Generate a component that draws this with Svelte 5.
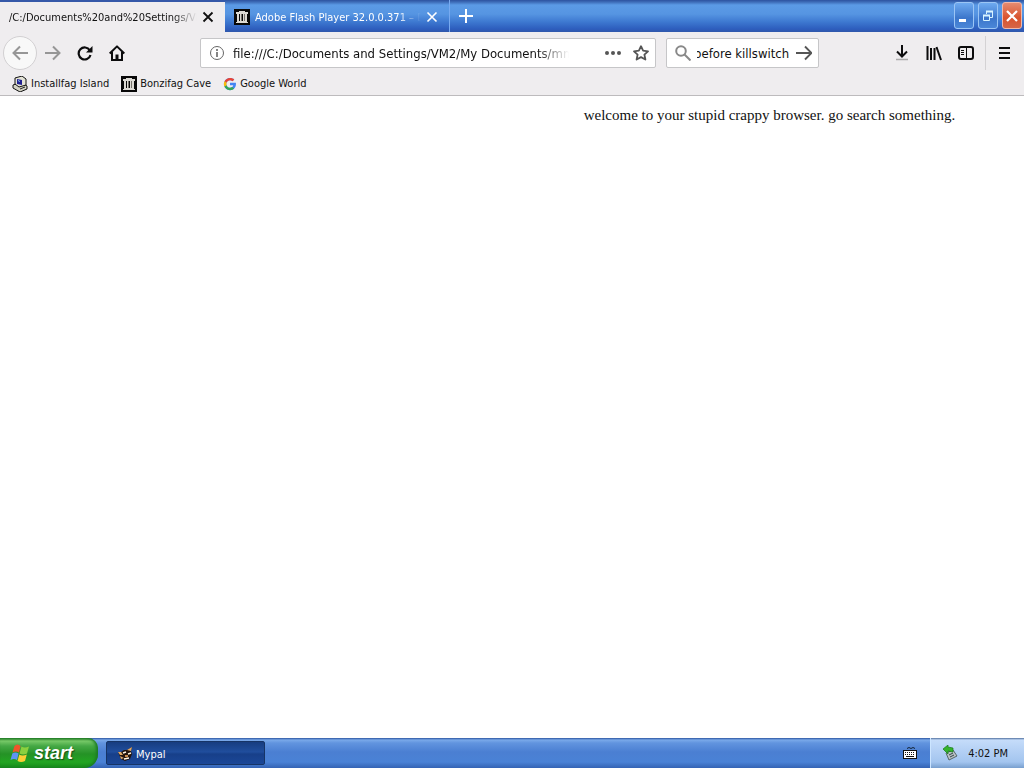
<script lang="ts">
  let address = $state("file:///C:/Documents and Settings/VM2/My Documents/mm");
  let query = $state("before killswitch");
  let time = "4:02 PM";
</script>

{#snippet archive()}
  <svg width="16" height="16" viewBox="0 0 16 16" aria-hidden="true">
    <rect width="16" height="16" fill="#080808" />
    <path d="M5 2h6v1h3v2H2V3h3zM3 12h10v1h1v1H2v-1h1z" fill="#dcdad4" />
    <path d="M3 5h2v7H3zM6 5h1v7H6zM9 5h1v7H9zM11 5h2v7h-2z" fill="#dcdad4" />
    <path d="M7 5h1v7H7zM10 5h1v7h-1z" fill="#77736c" />
  </svg>
{/snippet}

<div class="desktop">
  <header class="titlebar">
    <div class="tab active">
      <span class="title">/C:/Documents%20and%20Settings/VM</span>
      <button class="close" aria-label="Close tab">
        <svg width="12" height="12" viewBox="0 0 12 12"><path d="M1.5 1.5l9 9M10.5 1.5l-9 9" stroke="#111" stroke-width="1.8" /></svg>
      </button>
    </div>
    <div class="tab">
      {@render archive()}
      <span class="title">Adobe Flash Player 32.0.0.371 – Do</span>
      <button class="close" aria-label="Close tab">
        <svg width="12" height="12" viewBox="0 0 12 12"><path d="M1.5 1.5l9 9M10.5 1.5l-9 9" stroke="#fff" stroke-width="1.6" /></svg>
      </button>
    </div>
    <button class="new-tab" aria-label="New tab">
      <svg width="16" height="16" viewBox="0 0 16 16"><path d="M8 1v14M1 8h14" stroke="#fff" stroke-width="2" /></svg>
    </button>
    <div class="window-buttons">
      <button aria-label="Minimize">
        <svg width="18" height="24" viewBox="0 0 18 24"><path d="M4 16.5h7" stroke="#fff" stroke-width="3" /></svg>
      </button>
      <button aria-label="Restore">
        <svg width="18" height="24" viewBox="0 0 18 24" fill="none" stroke="#d9f4ff">
          <path d="M7.5 10V7.5h6v6H11" /><path d="M7 7.5h7" stroke-width="2" />
          <path d="M4.5 11.5h6v5h-6z" /><path d="M4 11.5h7" stroke-width="2" />
        </svg>
      </button>
      <button class="quit" aria-label="Close">
        <svg width="18" height="24" viewBox="0 0 18 24"><path d="M4 7l10 10M14 7L4 17" stroke="#fff" stroke-width="2.2" /></svg>
      </button>
    </div>
  </header>

  <nav class="toolbar">
    <button class="back" aria-label="Back">
      <svg width="16" height="16" viewBox="0 0 16 16"><path d="M8 1.5L1.5 8 8 14.5M2 8h14" /></svg>
    </button>
    <button class="forward" aria-label="Forward">
      <svg width="16" height="16" viewBox="0 0 16 16"><path d="M8 1.5L14.5 8 8 14.5M14 8H0" /></svg>
    </button>
    <button aria-label="Reload">
      <svg width="16" height="16" viewBox="0 0 16 16"><path d="M12.8 5.3A6 6 0 1 0 13.5 10" fill="none" stroke="#0c0c0d" stroke-width="2.2" /><path d="M15.5 1v6.5H9z" fill="#0c0c0d" /></svg>
    </button>
    <button aria-label="Home">
      <svg width="16" height="16" viewBox="0 0 16 16" fill="none" stroke="#0c0c0d" stroke-width="2"><path d="M.7 8.5L8 1.4l7.3 7.1" stroke-linejoin="round" /><path d="M3 7v8h10V7" /><path d="M8 15V9.5" stroke-width="3" /></svg>
    </button>

    <div class="field address">
      <svg width="16" height="16" viewBox="0 0 16 16" fill="none" stroke="#666"><circle cx="8" cy="8" r="6.5" /><path d="M8 7v5M8 4v2" stroke-width="1.6" /></svg>
      <input type="text" aria-label="Address" bind:value={address} />
      <button aria-label="Page actions">
        <svg width="16" height="16" viewBox="0 0 16 16" fill="#555"><circle cx="2" cy="8" r="2" /><circle cx="8" cy="8" r="2" /><circle cx="14" cy="8" r="2" /></svg>
      </button>
      <button aria-label="Bookmark this page">
        <svg width="16" height="16" viewBox="0 0 16 16"><path d="M8 1.2l2.1 4.5 4.9.6-3.6 3.3 1 4.9L8 12.1l-4.4 2.4 1-4.9L1 6.3l4.9-.6z" fill="none" stroke="#555" stroke-width="1.8" stroke-linejoin="round" /></svg>
      </button>
    </div>

    <div class="field search">
      <svg width="16" height="16" viewBox="0 0 16 16" fill="none" stroke="#888" stroke-width="2"><circle cx="6" cy="6" r="4.8" /><path d="M9.5 9.5l6 6" /></svg>
      <input type="text" aria-label="Search" bind:value={query} />
      <button aria-label="Go">
        <svg width="16" height="16" viewBox="0 0 16 16"><path d="M9 1.5L15.5 8 9 14.5M15 8H0" fill="none" stroke="#555" stroke-width="1.9" /></svg>
      </button>
    </div>

    <div class="tools">
      <button aria-label="Downloads">
        <svg width="16" height="16" viewBox="0 0 16 16" fill="none"><path d="M8 0v11M3 6.5l5 5 5-5" stroke="#0c0c0d" stroke-width="2" /><path d="M2 14.5h12" stroke="#aaa" stroke-width="1.5" /></svg>
      </button>
      <button aria-label="Library">
        <svg width="16" height="16" viewBox="0 0 16 16" stroke="#0c0c0d" stroke-width="2"><path d="M1.5 1v14M5 3v12M8.5 3v12M10.5 2L15 15" /></svg>
      </button>
      <button aria-label="Sidebars">
        <svg width="16" height="16" viewBox="0 0 16 16" fill="none" stroke="#0c0c0d"><rect x="1" y="2" width="14" height="12" rx="2" stroke-width="2" /><path d="M8.5 2v12M3 5.5h3M3 7.5h3M3 9.5h3" /></svg>
      </button>
    </div>
    <button class="menu" aria-label="Open menu">
      <svg width="16" height="16" viewBox="0 0 16 16"><path d="M3 3h11M3 8h11M3 13h11" stroke="#0c0c0d" stroke-width="2" /></svg>
    </button>
  </nav>

  <div class="bookmarks">
    <a href="#island">
      <svg width="16" height="16" viewBox="0 0 16 16">
        <path d="M1 9l8-3 6 4v3l-7 3-7-4z" fill="#d2d2c4" stroke="#111" />
        <path d="M3 2l7-2 4 3v6l-7 2-4-3z" fill="#e3e3d6" stroke="#111" />
        <path d="M5 3l5 1v5L5 8z" fill="#202090" /><path d="M6 4l2 1v1L6 5z" fill="#8cf" />
        <path d="M8 13l5-2" stroke="#222" />
      </svg>
      Installfag Island
    </a>
    <a href="#cave">{@render archive()}Bonzifag Cave</a>
    <a href="#google">
      <svg width="14" height="14" viewBox="0 0 48 48">
        <path d="M44 20H24v8.5h11.3C34 33.5 29.8 37 24 37c-7.2 0-13-5.8-13-13s5.8-13 13-13c3.3 0 6.3 1.2 8.6 3.3l6-6C34.9 4.8 29.7 3 24 3 12.4 3 3 12.4 3 24s9.4 21 21 21 20.500-8.5 20.500-21c0-1.4-.2-2.7-.5-4z" fill="#4285f4" />
        <path d="M5.4 14.3l7 5.2C14.2 14.5 18.7 11 24 11c3.3 0 6.3 1.2 8.6 3.3l6-6C34.9 4.8 29.7 3 24 3 15.9 3 8.9 7.6 5.4 14.3z" fill="#ea4335" />
        <path d="M5.4 14.3C3.9 17.2 3 20.500 3 24s.8 6.700 2.300 9.500l7-5.500a13 13 0 0 1 .1-8.500z" fill="#fbbc05" />
        <path d="M24 45c5.500 0 10.300-2 13.900-5.500l-6.600-5.200C29.400 36 27 37 24 37c-5.400 0-10-3.700-11.700-9l-7 5.500C8.800 40.300 15.900 45 24 45z" fill="#34a853" />
      </svg>
      Google World
    </a>
  </div>

  <main>
    <p>welcome to your stupid crappy browser. go search something.</p>
  </main>

  <footer class="taskbar">
    <button class="start">
      <svg width="20" height="20" viewBox="0 0 20 20">
        <path d="M4.5 3q3-3 6 0L9 9.5q-3-2-6.5 0z" fill="#f0562a" />
        <path d="M11.5 3.5q3 2 7.5 0L17 10.500q-4 2-7.5 0z" fill="#8bd03f" />
        <path d="M2.3 10.5q3-2 6.3 0L7 17q-3-2-6.5 0z" fill="#5e94f5" />
        <path d="M9.3 11.5q3 2 7.5 0L15 18q-4 2-7.5 0z" fill="#fbce35" />
      </svg>
      start
    </button>
    <button class="task">
      <svg width="16" height="16" viewBox="0 0 16 16">
        <path d="M1 6h3l3-2h3l5-3-1 4 1 3-2 5-5 2-4-2z" fill="#24150d" />
        <path d="M1 6h3l2 3H3zM10 4l5-3-1 4zM3 10l4 2-3 1z" fill="#e0a868" />
        <path d="M6 7l3-1M11 8l3-1M7 13l5-1" stroke="#fff4e4" stroke-width="1.5" />
        <path d="M8 10h3" stroke="#c98a4c" stroke-width="2" />
      </svg>
      Mypal
    </button>
    <svg class="keyboard" width="14" height="14" viewBox="0 0 14 14">
      <path d="M4 2.5l2-1 2 1 2-1 2 1" fill="none" stroke="#123" />
      <rect x=".5" y="4.5" width="13" height="8" fill="#fff" stroke="#111" />
      <path d="M2 6.5h10M2 8.5h10" stroke="#111" stroke-dasharray="1 1" /><path d="M3 10.5h8" stroke="#111" />
    </svg>
    <div class="tray">
      <svg width="16" height="16" viewBox="0 0 16 16">
        <path d="M4 8l7-3 4 6-8 4z" fill="#b8c0c4" stroke="#566" />
        <path d="M7 10l4-2M8 12l4-2" stroke="#344" />
        <path d="M1 4l5-4v2l5 1v4L6 6v3z" fill="#35b42b" stroke="#187a1c" stroke-width=".7" />
      </svg>
      <time>{time}</time>
    </div>
  </footer>
</div>

<style>
  :global(body) {
    margin: 0;
  }

  .desktop {
    display: flex;
    flex-direction: column;
    min-height: 100vh;
    background: #fff;
    color: #111;
    font-family: "DejaVu Sans Condensed", "DejaVu Sans", sans-serif;
    font-size: 11px;
  }

  button {
    display: flex;
    align-items: center;
    justify-content: center;
    padding: 0;
    border: 0;
    background: none;
    color: inherit;
    font: inherit;
  }

  svg {
    display: block;
    flex: none;
  }

  .titlebar {
    display: flex;
    height: 32px;
    background: linear-gradient(#2d52a0 0, #3d6cb8 2px, #5b9ae6 5px, #5695e2 14px, #3d78d0 22px, #2d5dbd 29px, #3158ab 32px);
  }

  .tab {
    display: flex;
    box-sizing: border-box;
    align-items: center;
    gap: 5px;
    width: 225px;
    padding: 2px 11px 0 9px;
    border-right: 1px solid #78aaf0;
    color: #fff;
  }

  .tab.active {
    border-top: 2px solid #3558a8;
    border-right: 0;
    padding-top: 0;
    background: #efedef;
    color: #111;
  }

  .title {
    flex: 1;
    overflow: hidden;
    white-space: nowrap;
    mask-image: linear-gradient(to left, transparent, #000 24px);
  }

  .new-tab {
    width: 32px;
  }

  .window-buttons {
    display: flex;
    gap: 4px;
    margin-left: auto;
    padding: 2px 2px 3px 0;
  }

  .window-buttons button {
    width: 20px;
    border: 1px solid #9bc5f5;
    border-radius: 3px;
    background: linear-gradient(#6eaaf0, #3c76cb 60%, #4b87d8);
  }

  .window-buttons .quit {
    border-color: #f2b8a8;
    background: linear-gradient(#e58b70, #d9532d 60%, #d66648);
  }

  .toolbar {
    display: flex;
    align-items: center;
    height: 41px;
    padding: 0 3px;
    background: #efedef;
  }

  .toolbar > button {
    width: 32px;
    height: 34px;
  }

  .toolbar .back {
    box-sizing: border-box;
    width: 34px;
    border: 1px solid #d2d0d2;
    border-radius: 50%;
    background: #f8f8f8;
  }

  .back path,
  .forward path {
    fill: none;
    stroke: #969696;
    stroke-width: 2;
  }

  .field {
    display: flex;
    box-sizing: border-box;
    align-items: center;
    height: 30px;
    border: 1px solid #c6c6c8;
    border-radius: 2px;
    background: #fff;
  }

  .address {
    flex: 3;
    gap: 12px;
    margin-left: 67px;
    padding: 0 6px 0 8px;
  }

  .search {
    flex: 0 1 153px;
    gap: 6px;
    margin-left: 10px;
    padding: 0 6px 0 8px;
  }

  input {
    flex: 1;
    width: 0;
    min-width: 0;
    padding: 1px 0 0;
    border: 0;
    outline: 0;
    background: none;
    color: #111;
    font: inherit;
    font-size: 13px;
  }

  .address input {
    margin: 0 24px 0 -4px;
    mask-image: linear-gradient(to left, transparent, #000 32px);
  }

  .search input {
    text-indent: -3px;
  }

  .tools {
    display: flex;
    gap: 16px;
    margin-left: 75px;
    padding-right: 11px;
  }

  .toolbar .menu {
    width: 36px;
    border-left: 1px solid #d4d2d4;
  }

  .bookmarks {
    display: flex;
    gap: 12px;
    box-sizing: border-box;
    height: 23px;
    padding: 0 12px 1px;
    border-bottom: 1px solid #bdbbbd;
    background: #efedef;
  }

  .bookmarks a {
    display: flex;
    align-items: center;
    gap: 3px;
    color: #111;
    text-decoration: none;
    white-space: nowrap;
  }

  main {
    flex: 1;
    padding: 10px 0 0 57%;
    font-family: "Liberation Serif", serif;
    font-size: 15px;
    line-height: 18px;
  }

  main p {
    margin: 0;
    white-space: nowrap;
  }

  .taskbar {
    display: flex;
    align-items: center;
    height: 30px;
    color: #fff;
    background: linear-gradient(#2c54a0 0, #7aa9e9 2px, #6194df 5px, #4b7fd2 14px, #4a82d6 24px, #3463b4 30px);
  }

  .start {
    align-self: stretch;
    justify-content: flex-start;
    gap: 4px;
    width: 98px;
    padding-left: 10px;
    border-radius: 0 10px 14px 0;
    background: linear-gradient(#247c25 0, #77c968 3px, #45a845 8px, #259226 16px, #22a522 24px, #15891a 30px);
    box-shadow: inset -2px 0 3px #1c7a25;
    color: #fff;
    font: italic bold 18px "Liberation Sans", sans-serif;
    text-shadow: 1px 1px 1px #184f18;
  }

  .task {
    justify-content: flex-start;
    gap: 3px;
    width: 159px;
    height: 24px;
    margin-left: 8px;
    padding: 2px 0 0 10px;
    border: 1px solid #163466;
    border-radius: 2px;
    box-sizing: border-box;
    background: linear-gradient(#173d80, #204e9d 45%, #173f89 55%, #1b4797);
  }

  .keyboard {
    margin-left: auto;
  }

  .tray {
    display: flex;
    align-items: center;
    align-self: stretch;
    gap: 10px;
    margin-left: 13px;
    padding: 0 16px 0 11px;
    border-left: 1px solid #cce5ff;
    background: linear-gradient(#52719f 0, #c5dcfa 2px, #b5d1f5 12px, #a3c5ef 24px, #789fce 30px);
    color: #111;
  }
</style>
